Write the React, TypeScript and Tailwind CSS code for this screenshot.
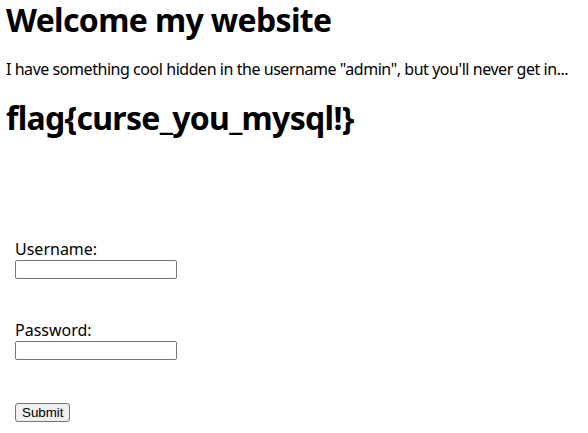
export default function App() {
  return (
    <div className="min-h-screen bg-white text-black font-['Noto_Sans',sans-serif] px-[6px]">
      <h1 className="text-[32px] font-bold leading-[40px] tracking-[-0.65px]">Welcome my website</h1>

      <p className="text-[16px] leading-[22px] mt-[18px] tracking-[-0.45px] whitespace-nowrap">
        I have something cool hidden in the username "admin", but you'll never get in...
      </p>

      <h1 className="text-[32px] font-bold leading-[40px] mt-[18px] tracking-[-0.7px]">
        flag{"{curse_you_mysql!}"}
      </h1>

      <form className="flex flex-col pl-[9px] mt-[101px]" onSubmit={(e) => e.preventDefault()}>
        <label className="text-[16px] leading-[20px]">Username:</label>
        <input
          type="text"
          className="w-[162px] h-[19px] mt-[1px] border border-[#767676] rounded-[2px] bg-white"
        />

        <label className="text-[16px] leading-[20px] mt-[41px]">Password:</label>
        <input
          type="password"
          className="w-[162px] h-[19px] mt-[1px] border border-[#767676] rounded-[2px] bg-white"
        />

        <div className="mt-[39px]">
          <button
            type="submit"
            className="h-[19px] px-[6px] text-[13.33px] leading-[15px] font-['Liberation_Sans',sans-serif] bg-[#efefef] border border-[#767676] rounded-[3px]"
          >
            Submit
          </button>
        </div>
      </form>
    </div>
  );
}
